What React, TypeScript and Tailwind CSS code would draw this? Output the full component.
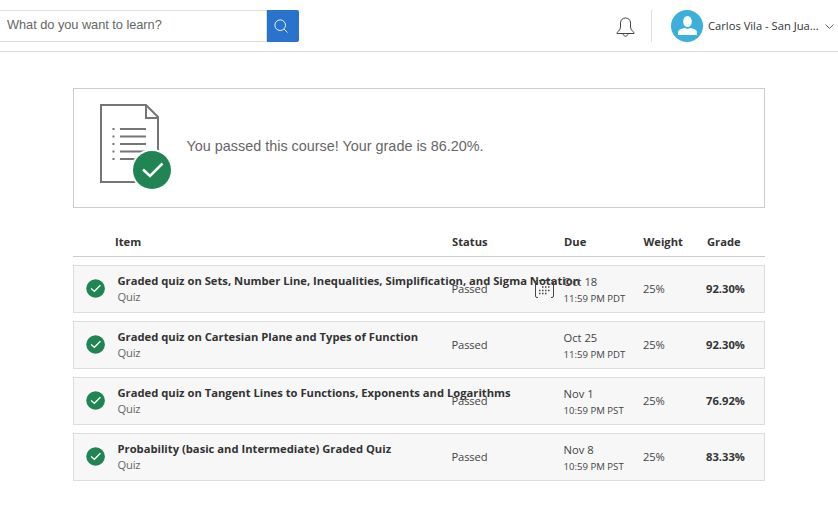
import React from "react";

interface Item {
  title: string;
  date: string;
  time: string;
  grade: string;
  calendar?: boolean;
}

const items: Item[] = [
  { title: "Graded quiz on Sets, Number Line, Inequalities, Simplification, and Sigma Notation", date: "Oct 18", time: "11:59 PM PDT", grade: "92.30%", calendar: true },
  { title: "Graded quiz on Cartesian Plane and Types of Function", date: "Oct 25", time: "11:59 PM PDT", grade: "92.30%" },
  { title: "Graded quiz on Tangent Lines to Functions, Exponents and Logarithms", date: "Nov 1", time: "10:59 PM PST", grade: "76.92%" },
  { title: "Probability (basic and Intermediate) Graded Quiz", date: "Nov 8", time: "10:59 PM PST", grade: "83.33%" },
];

function Header() {
  return (
    <header className="flex h-[52px] items-start border-b border-[#ddd] pt-2.5">
      <div className="flex h-8 w-[267px] border-y border-r border-[#ddd] pl-[7px]">
        <span className="pt-1 font-['Liberation_Sans',sans-serif] text-[12.8px] leading-5 tracking-[-0.04px] text-[#666]">What do you want to learn?</span>
      </div>
      <button className="flex h-8 w-8 items-center justify-center rounded-r-[2px] bg-[#2a73cc]">
        <svg className="-ml-1" width="14" height="14" viewBox="0 0 14 14" fill="none" stroke="#fff" strokeWidth="0.9">
          <circle cx="6.200" cy="6.200" r="5.300" />
          <path d="M10 10L13.500 13.500" />
        </svg>
      </button>
      <div className="ml-[317px] flex h-8 w-9 items-center border-r border-[#ddd]">
        <svg className="mt-px" width="20" height="20" viewBox="0 0 20 20" fill="none" stroke="#444" strokeWidth="1">
          <path d="M1 16.500V15.500C3.500 13.500 4.500 12 4.500 9V6C4.500 3 6.500 1 9.500 1S14.500 3 14.500 6V9C14.500 12 15.500 13.500 18 15.500V16.500ZM7 16.500C7 20 12 20 12 16.500" />
        </svg>
      </div>
      <svg className="ml-[19px] shrink-0" width="32" height="32" viewBox="0 0 32 32">
        <circle cx="16" cy="16" r="16" fill="#3cafda" />
        <ellipse cx="16.500" cy="11.500" rx="4.300" ry="5.500" fill="#fff" />
        <path d="M7 25V22.500C7 20 10 18.800 13.500 18C15 19 18 19 19.500 18C23 18.800 26 20 26 22.500V25Z" fill="#fff" />
      </svg>
      <span className="ml-[5px] w-[112px] whitespace-nowrap pt-1.5 text-[11.2px] leading-5 text-[#333]">Carlos Vila - San Jua...</span>
      <svg className="ml-[5px] mt-3.5 shrink-0" width="9" height="6" viewBox="0 0 9 6" fill="none" stroke="#555" strokeWidth="0.9"><path d="M.5.5L4.500 4.500L8.500.5" /></svg>
    </header>
  );
}

function Banner() {
  return (
    <section className="flex h-[120px] items-center border border-[#ccc] pl-[26px]">
      <svg className="shrink-0" width="74" height="88" viewBox="0 0 74 88" fill="none">
        <path d="M1 1H46L58 13V78H1Z" stroke="#757575" strokeWidth="2" />
        <path d="M46 1V14H58" stroke="#757575" strokeWidth="2" />
        <path d="M20 25H46M20 32.500H46M20 40H46M20 47.500H46M20 55H46" stroke="#757575" strokeWidth="2" />
        <path d="M12.500 25H14.500M12.500 32.500H14.500M12.500 40H14.500M12.500 47.500H14.500M12.500 55H14.500" stroke="#757575" strokeWidth="2" />
        <circle cx="52" cy="66" r="21" fill="#fff" />
        <circle cx="52" cy="66" r="19" fill="#208552" />
        <path d="M43 65.500L50 72L62.500 59.500" stroke="#fff" strokeWidth="2.500" />
      </svg>
      <p className="ml-[12.500px] whitespace-nowrap pb-1 font-['Liberation_Sans',sans-serif] text-[14.4px] leading-6 text-[#666]">You passed this course! Your grade is 86.20%.</p>
    </section>
  );
}

function CalendarIcon() {
  return (
    <svg className="-mt-0.5 mr-[10px] shrink-0" width="19" height="19" viewBox="0 0 19 19" fill="none" stroke="#444">
      <path d="M3 1.500H2Q.5 1.500.5 3V17Q.5 18.500 2 18.500H3M16 1.500H17Q18.500 1.500 18.500 3V17Q18.500 18.500 17 18.500H16" />
      <path d="M4 1.500H15" />
      <path d="M7 8H16M4 11.500H16M4 14.500H13" strokeWidth="1.500" strokeDasharray="1.500 1.500" />
    </svg>
  );
}

function Row({ item }: { item: Item }) {
  return (
    <li className="flex h-12 items-center border border-[#ddd] bg-[#f7f7f7] text-[11.2px] text-[#444]">
      <svg className="ml-[11.500px] mr-[0.500px] shrink-0" width="20" height="20" viewBox="0 0 20 20" fill="none">
        <circle cx="9.600" cy="9.500" r="9.300" fill="#208552" />
        <path d="M5.100 9.500L8.400 12.300L14.400 6.300" stroke="#fff" strokeWidth="1.300" />
      </svg>
      <div className="ml-[11.500px] w-[334px] shrink-0 whitespace-nowrap">
        <div className="font-bold leading-4 tracking-[0.012px] text-[#333]">{item.title}</div>
        <div className="leading-4 tracking-[-0.2px] text-[#666]">Quiz</div>
      </div>
      <div className="w-[54px] shrink-0 tracking-[-0.15px]">Passed</div>
      <div className="flex w-[58px] shrink-0 justify-end">{item.calendar && <CalendarIcon />}</div>
      <div className="w-[79.500px] shrink-0 whitespace-nowrap pt-0.5">
        <div className="leading-4">{item.date}</div>
        <div className="text-[9.6px] leading-[17px]">{item.time}</div>
      </div>
      <div className="w-[63px] shrink-0 tracking-[-0.15px]">25%</div>
      <div className="font-bold text-[#333]">{item.grade}</div>
    </li>
  );
}

export default function App() {
  return (
    <div className="h-[525px] w-[838px] overflow-hidden bg-white font-['Open_Sans',sans-serif]">
      <Header />
      <main className="mx-[73px] w-[692px] pt-9">
        <Banner />
        <div className="mt-[19px] flex h-[30px] border-b border-[#ccc] pl-[42px] pt-[5px] text-[11.2px] font-bold leading-5 text-[#333]">
          <span className="w-[337px]">Item</span>
          <span className="w-[112px]">Status</span>
          <span className="w-[79.500px]">Due</span>
          <span className="w-[63.500px]">Weight</span>
          <span>Grade</span>
        </div>
        <ul className="mt-2 flex flex-col gap-2">
          {items.map((item) => <Row key={item.title} item={item} />)}
        </ul>
      </main>
    </div>
  );
}
